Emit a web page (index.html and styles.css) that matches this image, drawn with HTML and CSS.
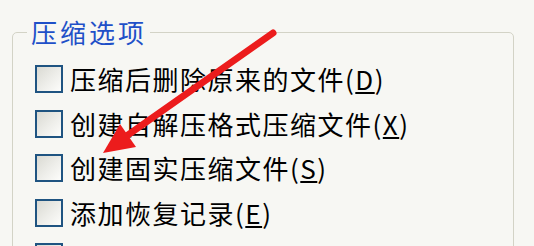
FILE: index.html
```html
<!DOCTYPE html>
<html lang="zh-CN">
<head>
<meta charset="utf-8">
<title>压缩选项</title>
<link rel="stylesheet" href="styles.css">
</head>
<body>
<fieldset class="group">
  <legend class="group-title">压缩选项</legend>
  <div class="row"><span class="box"></span><span class="label">压缩后删除原来的文件(<u>D</u>)</span></div>
  <div class="row"><span class="box"></span><span class="label">创建自解压格式压缩文件(<u>X</u>)</span></div>
  <div class="row"><span class="box"></span><span class="label">创建固实压缩文件(<u>S</u>)</span></div>
  <div class="row"><span class="box"></span><span class="label">添加恢复记录(<u>E</u>)</span></div>
  <div class="row"><span class="box"></span></div>
</fieldset>
<svg class="arrow" width="534" height="246" viewBox="0 0 534 246">
  <line x1="273" y1="33" x2="125" y2="137" stroke="#ec1c1c" stroke-width="7" stroke-linecap="round"/>
  <polygon points="103,153 120,124 136,147" fill="#ec1c1c"/>
</svg>
</body>
</html>
```
FILE: styles.css
```css
html, body {
  margin: 0;
  padding: 0;
  background: #f7f7f3;
  overflow: hidden;
  width: 534px;
  height: 246px;
}
body {
  position: relative;
  font-family: "Noto Sans CJK SC", "Noto Sans", sans-serif;
}
.group {
  margin: 18px 0 0 12px;
  width: 502px;
  height: 400px;
  padding: 11px 0 0 22px;
  border: 1.5px solid #d3d3c6;
  border-radius: 5px;
  box-sizing: border-box;
}
.group-title {
  margin-left: -8px;
  padding: 0 3px 0 4px;
  font-size: 26px;
  line-height: 28px;
  color: #1f50c8;
  letter-spacing: 3px;
}
.row {
  display: flex;
  align-items: center;
  height: 44.5px;
  gap: 7px;
}
.box {
  width: 28px;
  height: 28px;
  box-sizing: border-box;
  border: 2px solid #1f5481;
  background: linear-gradient(135deg, #dadad3 0%, #eeeeea 55%, #fdfdfb 100%);
  flex: none;
}
.label {
  font-size: 26px;
  line-height: 30px;
  color: #000;
  letter-spacing: 1.5px;
  white-space: nowrap;
}
.arrow {
  position: absolute;
  left: 0;
  top: 0;
}
```
